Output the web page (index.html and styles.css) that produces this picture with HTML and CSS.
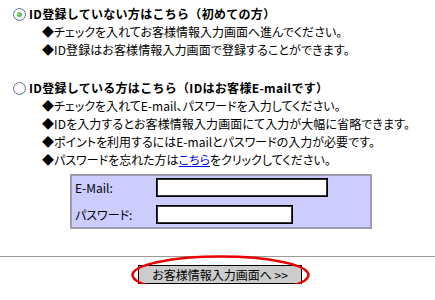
FILE: index.html
```html
<!DOCTYPE html>
<html lang="ja">

<head>
    <meta charset="UTF-8">
    <title>ログイン選択</title>
    <link rel="stylesheet" href="styles.css">
</head>

<body>

    <section class="option first">
        <h2 class="option-title"><span class="radio checked"></span>ID登録していない方はこちら（初めての方）</h2>
        <ul class="notes">
            <li>◆チェックを入れてお客様情報入力画面へ進んでください。</li>
            <li>◆ID登録はお客様情報入力画面で登録することができます。</li>
        </ul>
    </section>

    <section class="option second">
        <h2 class="option-title"><span class="radio"></span>ID登録している方はこちら（IDはお客様E-mailです）</h2>
        <ul class="notes">
            <li>◆チェックを入れてE-mail、パスワードを入力してください。</li>
            <li>◆IDを入力するとお客様情報入力画面にて入力が大幅に省略できます。</li>
            <li>◆ポイントを利用するにはE-mailとパスワードの入力が必要です。</li>
            <li>◆パスワードを忘れた方は<a href="#">こちら</a>をクリックしてください。</li>
        </ul>

        <div class="login-box">
            <label for="email">E-Mail:</label>
            <input class="email" id="email" type="text">
            <label for="pass">パスワード:</label>
            <input class="pass" id="pass" type="password">
        </div>
    </section>

    <hr class="divider">

    <div class="submit-row">
        <div class="submit-wrap">
            <button class="submit">お客様情報入力画面へ &gt;&gt;</button>
            <!-- rød markering rundt om knappen -->
            <svg class="circle-mark" width="181" height="42" viewBox="0 0 181 42">
                <ellipse cx="90.5" cy="21" rx="88" ry="18.5" fill="none" stroke="#e80000" stroke-width="2.5"/>
            </svg>
        </div>
    </div>

</body>

</html>
```

FILE: styles.css
```css
body {
    margin: 0;
    font-family: "Noto Sans CJK JP", "Noto Sans", sans-serif;
    font-size: 12px;
    font-feature-settings: "palt";
    color: #000;
    background-color: #fff;
}

.option {
    margin: 0;
}

.first {
    padding-top: 5px;
}

.second {
    padding-top: 20px;
}

.option-title {
    display: flex;
    align-items: center;
    margin: 0;
    padding-left: 13px;
    font-size: 12px;
    font-weight: bold;
    font-feature-settings: normal;
    letter-spacing: 0.3px;
    line-height: 18px;
}

.radio {
    width: 11px;
    height: 11px;
    margin-right: 3px;
    border: 1px solid #5a7a9a;
    border-radius: 50%;
    background: radial-gradient(circle at 40% 35%, #ffffff 30%, #dfe3ea 100%);
    position: relative;
}

.radio.checked::after {
    content: "";
    position: absolute;
    left: 3px;
    top: 3px;
    width: 5px;
    height: 5px;
    border-radius: 50%;
    background: radial-gradient(circle at 40% 40%, #8fe28f, #1ea21e);
}

.notes {
    list-style: none;
    margin: 0;
    padding-left: 42px;
    line-height: 18px;
}

.notes li:nth-child(2) {
    letter-spacing: 0.1px;
}

.notes a {
    color: #0000ee;
}

.login-box {
    display: grid;
    grid-template-columns: 81px auto;
    align-items: center;
    row-gap: 8px;
    width: 292px;
    margin: 5px 0 0 70px;
    padding: 2px 3px 3px;
    background-color: #ccccff;
    border: 2px solid #9c9cae;
}

.login-box label {
    line-height: 18px;
}

.login-box input {
    box-sizing: border-box;
    height: 19px;
    margin: 0;
    padding: 0 2px;
    border: 1px solid #000;
    box-shadow: inset 0 0 0 1px #333;
    background-color: #fff;
}

.email {
    width: 172px;
}

.pass {
    width: 137px;
}

.divider {
    margin: 27px 0 0;
    border: 0;
    border-top: 1px solid #999;
}

.submit-row {
    display: flex;
    justify-content: center;
    padding-top: 8px;
    padding-left: 5px;
}

.submit-wrap {
    position: relative;
}

.submit {
    width: 164px;
    height: 19px;
    padding: 0;
    font-family: inherit;
    font-size: 12px;
    font-feature-settings: "palt";
    line-height: 17px;
    background-color: #cccccc;
    border: 1px solid #000;
    border-radius: 0;
}

.circle-mark {
    position: absolute;
    left: -8px;
    top: -11px;
    pointer-events: none;
}
```
